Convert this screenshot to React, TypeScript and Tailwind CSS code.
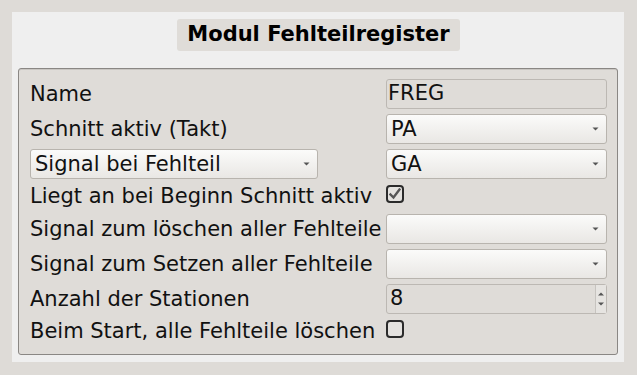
import React from 'react';

const font = { fontFamily: '"DejaVu Sans", Verdana, sans-serif' };

function Arrow() {
  return (
    <svg width="7" height="4" viewBox="0 0 7 4" className="shrink-0">
      <path d="M0.5 0.5 L6.5 0.5 L3.5 3.5 Z" fill="#555" />
    </svg>
  );
}

function Combo({ value, className = '' }: { value?: string; className?: string }) {
  return (
    <div
      className={`flex h-[30px] items-center justify-between rounded-[3px] border border-[#b8b4ae] bg-gradient-to-b from-[#fbfbfa] to-[#e9e7e4] pl-[4px] pr-[7px] text-[21px] text-[#111] ${className}`}
    >
      <span className="leading-none">{value}</span>
      <Arrow />
    </div>
  );
}

function Check({ checked }: { checked?: boolean }) {
  return (
    <div className="flex h-[25px] items-start pt-[1px]">
      <div className="flex h-[18px] w-[18px] items-center justify-center rounded-[4px] border-2 border-[#2b2b2b] bg-[#e4e2df]">
        {checked && (
          <svg width="12" height="12" viewBox="0 0 12 12">
            <path d="M1.5 6.5 L4.5 9.5 L10.5 1.5" fill="none" stroke="#555" strokeWidth="2.4" strokeLinecap="square" />
          </svg>
        )}
      </div>
    </div>
  );
}

function Label({ children, tall = true }: { children: React.ReactNode; tall?: boolean }) {
  return (
    <div className={`flex ${tall ? 'h-[30px]' : 'h-[25px]'} items-center whitespace-nowrap pt-[1px] text-[21px] text-[#111]`}>
      {children}
    </div>
  );
}

export default function App() {
  return (
    <div className="h-[375px] w-[637px] bg-[#dedbd7] pl-[12px] pr-[13px] pt-[12px] pb-[13px]" style={font}>
      <div className="flex h-full flex-col bg-[#efefef] px-[6px] pt-[7px] pb-[7px]">
        <div className="flex justify-center pl-[159px] pr-[158px]">
          <div className="flex h-[32px] w-full items-center justify-center rounded-[3px] bg-[#dfdcd8] text-[21px] font-bold text-black">
            Modul Fehlteilregister
          </div>
        </div>
        <div className="mt-[17px] flex-1 rounded-[3px] border border-[#8a8784] bg-[#dfdcd8] pl-[11px] pr-[10px] pt-[10px] shadow-[inset_0_1px_0_#c9c6c2]">
          <div className="grid grid-cols-[minmax(0,1fr)_221px] gap-x-[6px] gap-y-[5px]">
            <Label>Name</Label>
            <div className="flex h-[30px] items-center rounded-[3px] border border-[#bcb8b3] bg-[#dfdcd8] pl-[1px] text-[21px] text-[#111]">
              FREG
            </div>

            <Label>Schnitt aktiv (Takt)</Label>
            <Combo value="PA" />

            <div className="flex">
              <Combo value="Signal bei Fehlteil" className="w-[288px]" />
            </div>
            <Combo value="GA" />

            <Label tall={false}>Liegt an bei Beginn Schnitt aktiv</Label>
            <Check checked />

            <Label>Signal zum löschen aller Fehlteile</Label>
            <Combo />

            <Label>Signal zum Setzen aller Fehlteile</Label>
            <Combo />

            <Label>Anzahl der Stationen</Label>
            <div className="flex h-[30px] items-stretch rounded-[3px] border border-[#bcb8b3] bg-[#dfdcd8] text-[21px] text-[#111]">
              <div className="flex flex-1 items-center pl-[3px]">8</div>
              <div className="flex w-[11px] flex-col items-center justify-center gap-[6px] border-l border-[#c6c3bf] bg-[#e6e4e1]">
                <svg width="6" height="4" viewBox="0 0 6 4">
                  <path d="M0 3.5 L6 3.5 L3 0.5 Z" fill="#555" />
                </svg>
                <svg width="6" height="4" viewBox="0 0 6 4">
                  <path d="M0 0.5 L6 0.5 L3 3.5 Z" fill="#555" />
                </svg>
              </div>
            </div>

            <Label tall={false}>Beim Start, alle Fehlteile löschen</Label>
            <Check />
          </div>
        </div>
      </div>
    </div>
  );
}
